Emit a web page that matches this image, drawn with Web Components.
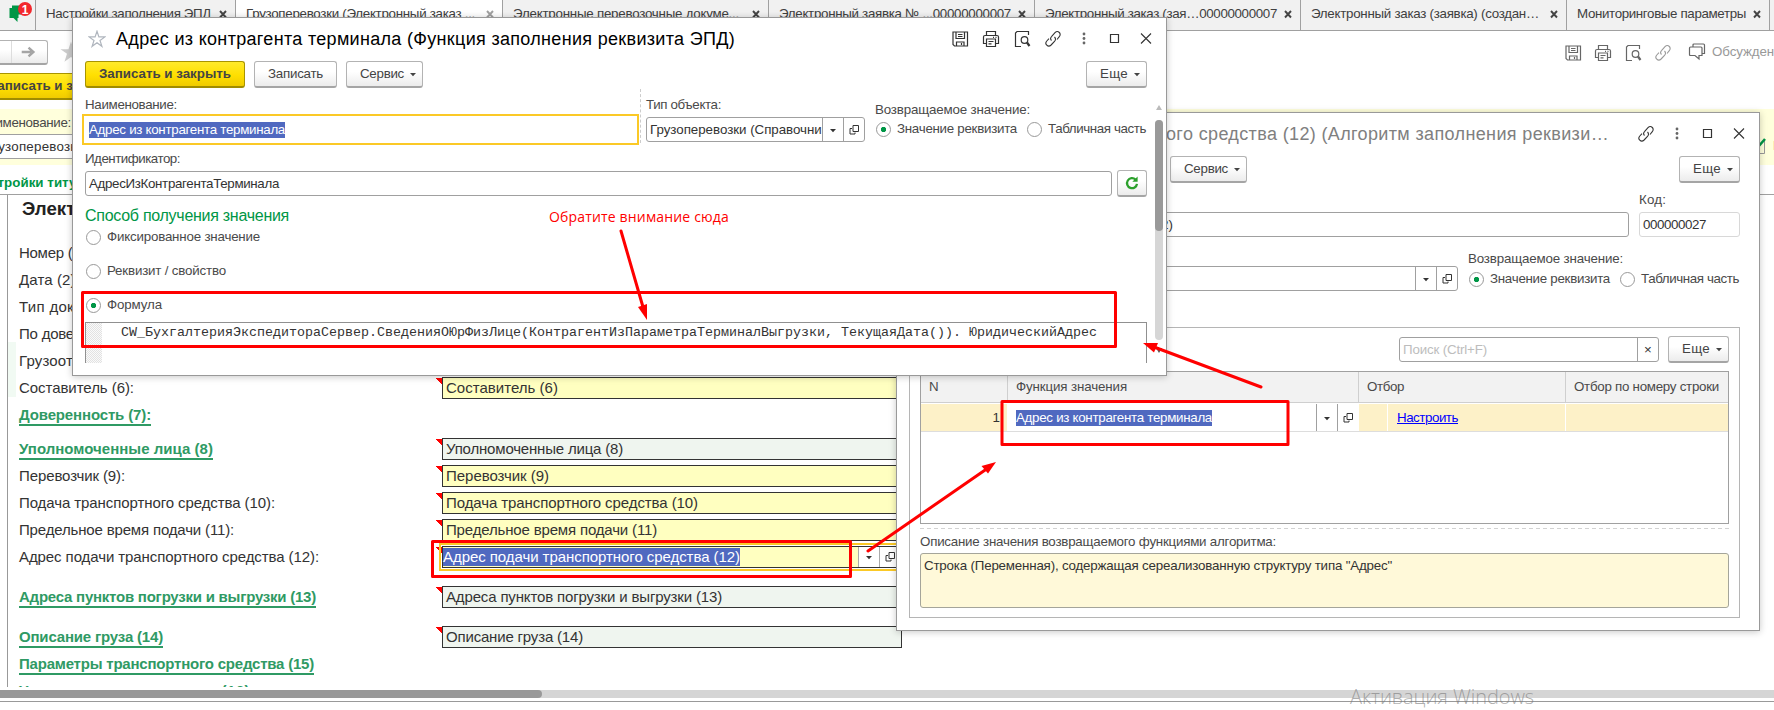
<!DOCTYPE html>
<html lang="ru">
<head>
<meta charset="utf-8">
<title>Функция заполнения реквизита ЭПД</title>
<style>
    html, body {
        margin: 0;
        padding: 0;
    }
    body {
        width: 1774px;
        height: 710px;
        overflow: hidden;
        background: #fff;
        font: 13.330px/16px "Liberation Sans", Arial, sans-serif;
        color: #4a4a4a;
    }
</style>
</head>
<body>
<app-desktop></app-desktop>

<script>
const ICONS = {
    save: '<path d="M2 2h14.500v14H3.500L2 14.500z"/><path d="M5 2v6.500h8.500V2M7 4.500h4.500M7 6.500h4.500M5.500 16v-4h7.500v4M10.500 13v2"/>',
    print: '<path d="M4.500 5V1.500h9V5M4 13.500H1.500V7q0-1.500 1.500-1.500h12q1.500 0 1.500 1.500v6.500H14M4.500 9h9v7.500h-9zM6.500 11.500h5M6.500 13.800h3M11 7.300h1M13.500 7.300h1"/>',
    preview: '<path d="M8 16.500H2.500V3L4 1.500h11.500V5"/><circle cx="11.500" cy="10" r="3.300"/><path d="M14 12.500l2.500 3.500" stroke-width="2.200"/>',
    link: '<path d="M7.500 10.500c-1.500-1.500-1-3 .2-4.200l3.300-3.600c1.300-1.300 3.200-1.300 4.300-.2s1.200 3 0 4.200L13 9.500M10.500 7c1.500 1.500 1.200 3.200 0 4.400l-3.400 3.600c-1.300 1.300-3.200 1.300-4.300.2s-1.200-2.900 0-4.200L5 8.600" stroke-width="1.100"/>',
    dots: '<g fill="#666" stroke="none"><circle cx="9" cy="4" r="1.400"/><circle cx="9" cy="8.500" r="1.400"/><circle cx="9" cy="13" r="1.400"/></g>',
    max: '<path d="M4.500 4.500h8v8h-8z" stroke-width="1.200"/>',
    close: '<path d="M4 3.500l10 10M14 3.500L4 13.500" stroke-width="1.100"/>',
    chat: '<path d="M5 4V2q0-1 1-1h9.500q1 0 1 1v8.500h-2.500M1.500 5q0-1 1-1H13q1 0 1 1v7.500H11v3.500l-4-3.500H2.500q-1 0-1-1z"/>',
    open: '<path d="M8 4.500h5.500v6H8zM7 7.500H5v5.500h5V11.500" stroke-width="1"/>',
    refresh: '<path d="M14 9.800a5 5 0 1 1-1.500-4.300" stroke="#2ca02c" stroke-width="2.300"/><path d="M14.600 2.500v5.300H9.300z" fill="#2ca02c" stroke="none"/>',
    caret: '<path d="M6 8h6l-3 3.200z" fill="currentColor" stroke="none"/>',
    star: '<path d="M9 1.200l1.900 5.700h6L12 10.400l1.900 5.900L9 12.700l-4.900 3.600L6 10.400 1.100 6.900h6z" stroke="#b0b6be"/>'
};

class UiIcon extends HTMLElement {
    connectedCallback() {
        this.attachShadow({ mode: 'open' }).innerHTML = `
            <style>
                :host { display: inline-flex; flex: none; width: 18px; height: 18px; }
            </style>
            <svg width="18" height="18" viewBox="0 0 18 18" fill="none" stroke="currentColor" stroke-width="1.200">${ICONS[this.getAttribute('name')]}</svg>
        `;
    }
}

// Text run tracked out or in so that it takes exactly "w" pixels
class UiText extends HTMLElement {
    connectedCallback() {
        this.attachShadow({ mode: 'open' }).innerHTML = `
            <style>
                :host { display: flex; flex: none; white-space: nowrap; }
                :host([sel]) span { background: #5069c0; color: #fff; }
                :host([ul]) span { border-bottom: 2px solid currentColor; margin-bottom: -2px; }
                span { flex: none; }
            </style>
            <span><slot></slot></span>
        `;
        const w = parseFloat(this.getAttribute('w'));
        if (!w) return;
        const span = this.shadowRoot.querySelector('span');
        const natural = span.getBoundingClientRect().width;
        span.style.letterSpacing = `${(w - natural) / this.textContent.length}px`;
    }
}

class UiButton extends HTMLElement {
    connectedCallback() {
        this.attachShadow({ mode: 'open' }).innerHTML = `
            <style>
                :host {
                    display: flex;
                    flex: none;
                    box-sizing: border-box;
                    height: 27px;
                    width: ${this.getAttribute('width')}px;
                    padding-left: ${this.getAttribute('pad') || 13}px;
                    align-items: center;
                    border: 1px solid #b3b3b3;
                    border-bottom: 2px solid #a5a5a5;
                    border-radius: 3px;
                    background: linear-gradient(#fff 40%, #ececec);
                    color: #444;
                }
                :host([primary]) {
                    border-color: #a89400;
                    border-bottom: 2px solid #a08c00;
                    background: linear-gradient(#ffea2b, #ffdf00 55%, #f0cb00);
                    font-weight: bold;
                }
            </style>
            <slot></slot>${this.hasAttribute('menu') ? '<ui-icon name="caret"></ui-icon>' : ''}
        `;
    }
}

class UiField extends HTMLElement {
    connectedCallback() {
        this.attachShadow({ mode: 'open' }).innerHTML = `
            <style>
                :host {
                    display: flex;
                    box-sizing: border-box;
                    height: 25px;
                    border: 1px solid #a0a0a0;
                    border-radius: 3px;
                    background: #fff;
                    color: #333;
                }
                :host([light]) { border-color: #d8d8d8; }
                :host([focus]) {
                    height: 31px;
                    border: 2px solid #fbc926;
                    border-radius: 0;
                }
                .value {
                    flex: 1;
                    min-width: 0;
                    overflow: hidden;
                    display: flex;
                    align-items: center;
                    padding-left: 3px;
                }
                :host([focus]) .value { padding-left: 5px; }
                .btn {
                    width: 20px;
                    flex: none;
                    display: flex;
                    align-items: center;
                    justify-content: center;
                    border-left: 1px solid #a0a0a0;
                    color: #333;
                }
            </style>
            <div class="value"><slot></slot></div>
            ${this.hasAttribute('pick') ? '<div class="btn"><ui-icon name="caret"></ui-icon></div><div class="btn"><ui-icon name="open"></ui-icon></div>' : ''}
            ${this.hasAttribute('clear') ? '<div class="btn">×</div>' : ''}
        `;
    }
}

class UiRadio extends HTMLElement {
    connectedCallback() {
        this.attachShadow({ mode: 'open' }).innerHTML = `
            <style>
                :host { display: flex; align-items: center; gap: 6px; height: 16px; }
                i {
                    box-sizing: border-box;
                    width: 15px;
                    height: 15px;
                    border: 1px solid #999;
                    border-radius: 50%;
                    background: #fff;
                }
                :host([checked]) i { background: radial-gradient(#009646 2.300px, #fff 3px); }
            </style>
            <i></i><slot></slot>
        `;
    }
}

class AppTab extends HTMLElement {
    connectedCallback() {
        this.attachShadow({ mode: 'open' }).innerHTML = `
            <style>
                :host {
                    display: flex;
                    flex: none;
                    box-sizing: border-box;
                    width: ${this.getAttribute('width')}px;
                    height: 31px;
                    padding: 0 6px 2px 10px;
                    align-items: center;
                    justify-content: space-between;
                    border-right: 1px solid #a0a0a0;
                    border-bottom: 1px solid #a0a0a0;
                    background: #f1f1f1;
                    color: #404040;
                }
                :host([active]) { background: #fff; border-bottom-color: #fff; }
                :host([active]) svg { opacity: .5; }
            </style>
            <slot></slot>
            <svg width="12" height="12" viewBox="0 0 12 12"><path d="M3 3l6 6.500M9 3L3 9.500" stroke="#444" stroke-width="1.900"/></svg>
        `;
    }
}

class AppWindow extends HTMLElement {
    connectedCallback() {
        const tools = this.getAttribute('tools').split(' ');
        this.attachShadow({ mode: 'open' }).innerHTML = `
            <style>
                :host {
                    position: absolute;
                    box-sizing: border-box;
                    display: flex;
                    flex-direction: column;
                    border: 1px solid #999;
                    background: #fff;
                    box-shadow: 0 1px 7px rgba(0, 0, 0, .22);
                }
                header {
                    display: flex;
                    flex: none;
                    height: 41px;
                    align-items: center;
                    font-size: 18px;
                    line-height: 22px;
                }
                .tools { display: flex; margin-left: auto; padding-right: 5px; color: #333; }
                .tools ui-icon { width: 31px; justify-content: center; }
            </style>
            <header>
                <slot name="title"></slot>
                <div class="tools">${tools.map(t => `<ui-icon name="${t}"></ui-icon>`).join('')}</div>
            </header>
            <slot></slot>
        `;
    }
}

class FunctionWindow extends HTMLElement {
    connectedCallback() {
        this.attachShadow({ mode: 'open' }).innerHTML = `
            <style>
                app-window { left: 72px; top: 17px; width: 1095px; height: 359px; }
                .title { display: flex; align-items: center; padding-left: 15px; gap: 10px; color: #000; }
                .commands { display: flex; height: 30px; padding: 0 19px 0 12px; gap: 9px; align-items: center; box-sizing: border-box; }
                .end { margin-left: auto; }
                .body { display: flex; flex: 1; }
                .form { width: 1062px; padding-left: 12px; flex: none; }
                .top { display: flex; height: 62px; }
                .col { padding-top: 8px; box-sizing: border-box; }
                .name { width: 555px; }
                .name ui-field { width: 557px; margin: 1px 0 0 -3px; }
                .type { width: 225px; height: 54px; margin-right: 10px; padding-left: 5px; border-left: 1px dashed #ccc; }
                .type ui-field { margin-top: 4px; }
                .ret { padding-top: 13px; }
                .ret div { display: flex; justify-content: space-between; margin-top: 3px; width: 271px; }
                .ret ui-radio { margin-left: 1px; }
                .id { display: flex; margin-top: 3px; gap: 5px; align-items: center; }
                .id ui-field { width: 1027px; }
                h3 { margin: 9px 0 3px; font: 16px/20px "Liberation Sans", Arial, sans-serif; color: #009646; }
                .form > ui-radio { margin: 0 0 18px 1px; }
                .editor {
                    display: flex;
                    box-sizing: border-box;
                    height: 41px;
                    margin-top: -9px;
                    border: 1px solid #909090;
                    border-bottom: 0;
                    font: 13.330px/19px "Liberation Mono", "Courier New", monospace;
                    color: #333;
                }
                .gutter { width: 16px; margin-right: 19px; background: repeating-conic-gradient(#e2e2e2 0 25%, #fafafa 0 50%) 0 0 / 2px 2px; }
                .scroll { display: flex; flex-direction: column; align-items: center; margin-left: 8px; width: 8px; padding-top: 16px; }
                .up, .down { border: 3px solid transparent; }
                .up { border-bottom: 5px solid #bbb; border-top: 0; margin-bottom: 10px; }
                .down { border-top: 5px solid #555; border-bottom: 0; margin-top: 8px; }
                .track { width: 8px; height: 220px; border-radius: 4px; background: #d6d6d6; }
                .thumb { height: 111px; border-radius: 4px; background: #999; }
            </style>
            <app-window tools="save print preview link dots max close">
                <div class="title" slot="title"><ui-icon name="star"></ui-icon><ui-text w="619">Адрес из контрагента терминала (Функция заполнения реквизита ЭПД)</ui-text></div>
                <div class="commands">
                    <ui-button primary width="160"><ui-text w="132">Записать и закрыть</ui-text></ui-button>
                    <ui-button width="83"><ui-text w="55">Записать</ui-text></ui-button>
                    <ui-button width="77" menu><ui-text w="44">Сервис</ui-text></ui-button>
                    <ui-button class="end" width="61" menu><ui-text w="28">Еще</ui-text></ui-button>
                </div>
                <div class="body">
                    <div class="form">
                        <div class="top">
                            <div class="col name">
                                <ui-text w="92">Наименование:</ui-text>
                                <ui-field focus><ui-text sel w="196">Адрес из контрагента терминала</ui-text></ui-field>
                            </div>
                            <div class="col type">
                                <ui-text w="75">Тип объекта:</ui-text>
                                <ui-field pick><ui-text w="182">Грузоперевозки (Справочник)</ui-text></ui-field>
                            </div>
                            <div class="col ret">
                                <ui-text w="155">Возвращаемое значение:</ui-text>
                                <div>
                                    <ui-radio checked><ui-text w="120">Значение реквизита</ui-text></ui-radio>
                                    <ui-radio><ui-text w="98">Табличная часть</ui-text></ui-radio>
                                </div>
                            </div>
                        </div>
                        <ui-text w="95">Идентификатор:</ui-text>
                        <div class="id">
                            <ui-field><ui-text w="190">АдресИзКонтрагентаТерминала</ui-text></ui-field>
                            <ui-button width="30" pad="5"><ui-icon name="refresh"></ui-icon></ui-button>
                        </div>
                        <h3><ui-text w="204">Способ получения значения</ui-text></h3>
                        <ui-radio><ui-text w="153">Фиксированное значение</ui-text></ui-radio>
                        <ui-radio><ui-text w="119">Реквизит / свойство</ui-text></ui-radio>
                        <ui-radio checked><ui-text w="55">Формула</ui-text></ui-radio>
                        <div class="editor">
                            <div class="gutter"></div>
                            <ui-text w="976">CW_БухгалтерияЭкспедитораСервер.СведенияОЮрФизЛице(КонтрагентИзПараметраТерминалВыгрузки, ТекущаяДата()). ЮридическийАдрес</ui-text>
                        </div>
                    </div>
                    <div class="scroll">
                        <div class="up"></div>
                        <div class="track"><div class="thumb"></div></div>
                        <div class="down"></div>
                    </div>
                </div>
            </app-window>
        `;
    }
}

class AlgorithmWindow extends HTMLElement {
    connectedCallback() {
        this.attachShadow({ mode: 'open' }).innerHTML = `
            <style>
                app-window { left: 896px; top: 112px; width: 864px; height: 519px; }
                .title { padding-left: 269px; color: #808080; }
                .commands { display: flex; height: 31px; padding: 0 19px 0 273px; align-items: center; justify-content: space-between; }
                .form { padding: 7px 19px 0 12px; }
                .line { display: flex; justify-content: space-between; }
                .long { width: 720px; margin-top: 20px; }
                .long ui-text { margin-left: 248px; }
                .code ui-field { width: 101px; margin-top: 4px; }
                .ret { margin-top: 14px; }
                .ret > ui-field { width: 549px; margin-top: 15px; }
                .radios { width: 272px; }
                .radios .line { margin: 4px 1px 0 1px; }
                fieldset {
                    display: block;
                    box-sizing: border-box;
                    height: 291px;
                    margin: 36px 0 0;
                    padding: 8px 10px 0;
                    border: 1px solid #b5b5b5;
                }
                .search { display: flex; justify-content: flex-end; align-items: center; gap: 9px; }
                .search ui-field { width: 260px; }
                .search ui-field ui-text { color: #bdbdbd; }
                .table { box-sizing: border-box; height: 153px; margin-top: 8px; border: 1px solid #a0a0a0; }
                .row { display: grid; grid-template-columns: 86px 350px 206px 162px; gap: 1px; }
                .head { height: 30px; background: #cfcfcf; border-bottom: 1px solid #cfcfcf; }
                .head > * { background: #f2f2f2; padding: 7px 0 0 8px; }
                .line1 { height: 27px; padding-top: 1px; border-bottom: 1px solid #ddd; }
                .line1 > * { background: #fdf1c8; display: flex; align-items: center; color: #333; }
                .line1 .n { justify-content: flex-end; padding-right: 7px; }
                .line1 .edit { background: #fff; padding-left: 8px; }
                .cell-btn { display: flex; align-items: center; height: 27px; width: 20px; border-left: 1px solid #a0a0a0; justify-content: center; }
                .first { margin-left: auto; }
                .sub { width: 28px; height: 27px; border-right: 1px solid #fff; margin-right: 9px; }
                a { color: #00f; text-decoration: underline; }
                hr { border: 0; height: 1px; margin: 4px 0 5px; background: repeating-linear-gradient(90deg, #d2d2d2 0 4px, transparent 4px 7px); }
                .note {
                    box-sizing: border-box;
                    height: 55px;
                    margin-top: 3px;
                    padding: 4px 3px;
                    border: 1px solid #a5a59a;
                    border-radius: 3px;
                    background: #fff9d9;
                    color: #333;
                }
            </style>
            <app-window tools="link dots max close">
                <div class="title" slot="title"><ui-text w="443">ого средства (12) (Алгоритм заполнения реквизи…</ui-text></div>
                <div class="commands">
                    <ui-button width="77" menu><ui-text w="44">Сервис</ui-text></ui-button>
                    <ui-button width="61" menu><ui-text w="28">Еще</ui-text></ui-button>
                </div>
                <div class="form">
                    <div class="line">
                        <ui-field class="long"><ui-text w="12">2)</ui-text></ui-field>
                        <div class="code">
                            <ui-text w="27">Код:</ui-text>
                            <ui-field light><ui-text w="63">000000027</ui-text></ui-field>
                        </div>
                    </div>
                    <div class="line ret">
                        <ui-field pick></ui-field>
                        <div class="radios">
                            <ui-text w="155">Возвращаемое значение:</ui-text>
                            <div class="line">
                                <ui-radio checked><ui-text w="120">Значение реквизита</ui-text></ui-radio>
                                <ui-radio><ui-text w="98">Табличная часть</ui-text></ui-radio>
                            </div>
                        </div>
                    </div>
                    <fieldset>
                        <div class="search">
                            <ui-field clear><ui-text w="84">Поиск (Ctrl+F)</ui-text></ui-field>
                            <ui-button width="61" menu><ui-text w="28">Еще</ui-text></ui-button>
                        </div>
                        <div class="table">
                            <div class="row head">
                                <ui-text>N</ui-text>
                                <ui-text w="111">Функция значения</ui-text>
                                <ui-text w="37">Отбор</ui-text>
                                <ui-text w="145">Отбор по номеру строки</ui-text>
                            </div>
                            <div class="row line1">
                                <div class="n"><ui-text>1</ui-text></div>
                                <div class="edit">
                                    <ui-text sel w="196">Адрес из контрагента терминала</ui-text>
                                    <div class="cell-btn first"><ui-icon name="caret"></ui-icon></div>
                                    <div class="cell-btn"><ui-icon name="open"></ui-icon></div>
                                </div>
                                <div><div class="sub"></div><a><ui-text w="61">Настроить</ui-text></a></div>
                                <div></div>
                            </div>
                        </div>
                        <hr>
                        <ui-text w="356">Описание значения возвращаемого функциями алгоритма:</ui-text>
                        <div class="note"><ui-text w="468">Строка (Переменная), содержащая сереализованную структуру типа "Адрес"</ui-text></div>
                    </fieldset>
                </div>
            </app-window>
        `;
    }
}

class DocRow extends HTMLElement {
    connectedCallback() {
        const kind = this.getAttribute('kind');
        const value = this.getAttribute('value');
        let field = '';
        if (kind === 'edit') {
            field = `<div class="field edit"><ui-text sel w="297">${value}</ui-text>
                <div class="btn first"><ui-icon name="caret"></ui-icon></div><div class="btn"><ui-icon name="open"></ui-icon></div></div>`;
        } else if (value) {
            field = `<div class="field ${kind}"><ui-text w="${this.getAttribute('vw')}">${value}</ui-text></div>`;
        }
        this.attachShadow({ mode: 'open' }).innerHTML = `
            <style>
                :host { display: flex; height: 27px; align-items: center; font-size: 15px; line-height: 18px; color: #333; }
                .label { width: 417px; flex: none; }
                :host([section]) .label { color: #2f9a64; font-weight: bold; }
                .tri { width: 6px; height: 21px; flex: none; }
                .tri.on { background: linear-gradient(to top right, transparent 50%, #f00 50%) 0 1px / 6px 7px no-repeat; }
                .field {
                    display: flex;
                    box-sizing: border-box;
                    width: 460px;
                    height: 22px;
                    align-items: center;
                    padding-left: 3px;
                    border: 1px solid #333;
                    background: #eff5ef;
                }
                .yellow, .edit { background: #ffffc0; }
                .edit { padding: 0; outline: 2px solid #fbc926; outline-offset: 1px; }
                .btn { display: flex; height: 20px; width: 20px; justify-content: center; align-items: center; background: #fff; border-left: 1px solid #aaa; }
                .first { margin-left: 118px; }
            </style>
            <div class="label"><ui-text w="${this.getAttribute('lw') || ''}" ${this.hasAttribute('section') ? 'ul' : ''}>${this.getAttribute('label')}</ui-text></div>
            <div class="tri ${field ? 'on' : ''}"></div>
            ${field}
        `;
    }
}

class MainForm extends HTMLElement {
    connectedCallback() {
        this.attachShadow({ mode: 'open' }).innerHTML = `
            <style>
                :host { display: block; height: 679px; }
                .nav { display: flex; height: 42px; align-items: center; }
                .arrows { display: flex; width: 47px; height: 22px; border: 1px solid #b3b3b3; border-left: 0; border-bottom: 2px solid #a5a5a5; border-radius: 0 3px 3px 0; background: linear-gradient(#fff 40%, #ececec); }
                .arrows svg { margin-left: 11px; border-left: 1px solid #ddd; }
                .fav { margin-left: 11px; }
                .tools { display: flex; align-items: center; margin: 2px 0 0 auto; width: 216px; color: #666; flex: none; }
                .tools ui-icon { width: 30px; justify-content: center; }
                .pale { color: #999; }
                .tools .chat { width: 18px; margin: -3px 6px 0 10px; }
                .tools ui-text { margin-top: -2px; }
                .cmd { height: 36px; display: flex; }
                .cmd ui-button { margin-left: -25px; }
                .band { height: 56px; background: #ffffdc; display: flex; justify-content: space-between; overflow: hidden; }
                .band .left { width: 200px; padding-top: 6px; }
                .left > ui-text { margin-left: -21px; }
                .left ui-field { margin: 3px 0 0 -20px; }
                .check { display: flex; align-items: center; gap: 7px; width: 14px; padding-top: 17px; height: 39px; }
                .heading { height: 30px; border-bottom: 1px solid #a0a0a0; font-weight: bold; color: #009646; box-sizing: border-box; overflow: hidden; }
                .heading ui-text { margin: 10px 0 0 -27px; }
                .doc { margin-left: 7px; border-left: 1px solid #999; height: 492px; padding-left: 11px; overflow: hidden; position: relative; }
                .doc h1 { margin: 0 0 0 3px; height: 44px; font: bold 18.670px/27px "Liberation Sans", Arial, sans-serif; color: #222; }
                .mark { position: absolute; left: 0; top: 147px; width: 8px; height: 55px; background: #f1faf3; }
                .gap7 { margin-top: 7px; }
                .gap13 { margin-top: 13px; }
                .hscroll { height: 8px; margin-top: 3px; background: #d5d5d5; }
                .hscroll div { width: 542px; height: 8px; background: #999; border-radius: 0 4px 4px 0; }
                .foot { margin-top: 3px; border-top: 1px solid #999; }
            </style>
            <div class="nav">
                <div class="arrows"><svg width="36" height="22" viewBox="0 0 36 22"><path d="M10 11h10M17 6.500l5 4.500-5 4.500" fill="none" stroke="#a5a5a5" stroke-width="2.500"/></svg></div>
                <svg class="fav" width="24" height="24" viewBox="0 0 18 18"><path d="M9 1.200l1.900 5.700h6L12 10.400l1.900 5.900L9 12.700l-4.900 3.600L6 10.400 1.100 6.900h6z" fill="#ccc"/></svg>
                <div class="tools">
                    <ui-icon name="save"></ui-icon><ui-icon name="print"></ui-icon><ui-icon name="preview"></ui-icon><ui-icon class="pale" name="link"></ui-icon>
                    <ui-icon class="chat" name="chat"></ui-icon><ui-text class="pale" w="62">Обсужден</ui-text>
                </div>
            </div>
            <div class="cmd"><ui-button primary width="160"><ui-text w="132">Записать и закрыть</ui-text></ui-button></div>
            <div class="band">
                <div class="left">
                    <ui-text w="92">Наименование:</ui-text>
                    <ui-field><ui-text w="100">Грузоперевозки</ui-text></ui-field>
                </div>
                <div class="check">
                    <svg width="6" height="18" viewBox="0 0 6 18" overflow="visible"><path d="M0 16.500h4.500V3" fill="none" stroke="#999"/><path d="M-2 10l7-8" stroke="#009646" stroke-width="2.500"/></svg>
                    <ui-text>И</ui-text>
                </div>
            </div>
            <div class="heading"><ui-text w="128">Настройки титулов</ui-text></div>
            <div class="doc">
                <div class="mark"></div>
                <h1>Электр</h1>
                <doc-row label="Номер (1):" lw="70"></doc-row>
                <doc-row label="Дата (2):" lw="61"></doc-row>
                <doc-row label="Тип док" lw="55"></doc-row>
                <doc-row label="По дове" lw="55"></doc-row>
                <doc-row label="Грузоот" lw="54"></doc-row>
                <doc-row label="Составитель (6):" lw="115" kind="yellow" value="Составитель (6)" vw="112"></doc-row>
                <doc-row section label="Доверенность (7):" lw="132"></doc-row>
                <doc-row class="gap7" section label="Уполномоченные лица (8)" lw="194" kind="green" value="Уполномоченные лица (8)" vw="177"></doc-row>
                <doc-row label="Перевозчик (9):" lw="106" kind="yellow" value="Перевозчик (9)" vw="103"></doc-row>
                <doc-row label="Подача транспортного средства (10):" lw="256" kind="yellow" value="Подача транспортного средства (10)" vw="252"></doc-row>
                <doc-row label="Предельное время подачи (11):" lw="215" kind="yellow" value="Предельное время подачи (11)" vw="211"></doc-row>
                <doc-row label="Адрес подачи транспортного средства (12):" lw="300" kind="edit" value="Адрес подачи транспортного средства (12)"></doc-row>
                <doc-row class="gap13" section label="Адреса пунктов погрузки и выгрузки (13)" lw="297" kind="green" value="Адреса пунктов погрузки и выгрузки (13)" vw="276"></doc-row>
                <doc-row class="gap13" section label="Описание груза (14)" lw="144" kind="green" value="Описание груза (14)" vw="137"></doc-row>
                <doc-row section label="Параметры транспортного средства (15)" lw="295"></doc-row>
                <doc-row section label="Условия перевозки груза (16)" lw="231"></doc-row>
            </div>
            <div class="hscroll"><div></div></div>
            <div class="foot"></div>
        `;
    }
}

class AppDesktop extends HTMLElement {
    connectedCallback() {
        this.attachShadow({ mode: 'open' }).innerHTML = `
            <style>
                :host { display: block; position: relative; width: 1774px; height: 710px; overflow: hidden; }
                nav { display: flex; height: 31px; }
                .bell { box-sizing: border-box; width: 36px; height: 31px; background: #f1f1f1; border: 1px solid #a0a0a0; border-width: 0 1px 1px 0; }
                .bell svg { display: block; }
                .rest { flex: 1; background: #f1f1f1; border-bottom: 1px solid #a0a0a0; }
                .marks, .mark-text, .watermark { position: absolute; }
                .marks { left: 0; top: 0; }
                .mark-text { left: 549px; top: 207px; font: 14px/20px "Open Sans", "Noto Sans", sans-serif; color: #f00; }
                .watermark { left: 1350px; top: 684px; font: 20px/26px "Open Sans", "Noto Sans", sans-serif; font-weight: 300; color: rgba(120, 120, 120, .6); }
            </style>
            <nav>
                <div class="bell"><svg width="35" height="30" viewBox="0 0 35 30">
                    <path d="M12 5.500h9v9h-9zM9.500 8h9v10h-1v4l-4-4h-4z" fill="#009646"/>
                    <circle cx="25" cy="9" r="7" fill="#f3272d"/>
                    <text x="25" y="13.500" text-anchor="middle" font-size="12" font-weight="bold" fill="#fff">1</text>
                </svg></div>
                <app-tab width="200"><ui-text w="165">Настройки заполнения ЭПД</ui-text></app-tab>
                <app-tab width="267" active><ui-text w="229">Грузоперевозки (Электронный заказ ...</ui-text></app-tab>
                <app-tab width="266"><ui-text w="226">Электронные перевозочные докуме...</ui-text></app-tab>
                <app-tab width="266"><ui-text w="232">Электронный заявка № ...00000000007</ui-text></app-tab>
                <app-tab width="266"><ui-text w="232">Электронный заказ (зая…00000000007</ui-text></app-tab>
                <app-tab width="266"><ui-text w="228">Электронный заказ (заявка) (создан…</ui-text></app-tab>
                <app-tab width="203"><ui-text w="169">Мониторинговые параметры</ui-text></app-tab>
                <div class="rest"></div>
            </nav>
            <main-form></main-form>
            <algorithm-window></algorithm-window>
            <function-window></function-window>
            <ui-text class="watermark" w="184">Активация Windows</ui-text>
            <ui-text class="mark-text" w="180">Обратите внимание сюда</ui-text>
            <svg class="marks" width="1774" height="710" viewBox="0 0 1774 710" fill="none" stroke="#f00" stroke-width="3" stroke-linecap="round" stroke-linejoin="round">
                <rect x="82.500" y="292.500" width="1033" height="54"/>
                <rect x="1002" y="401.500" width="286" height="43"/>
                <rect x="432.500" y="541.500" width="418" height="35"/>
                <path d="M621 231L643 307M1261 387L1154 347M868 551L988 468"/>
                <g fill="#f00" stroke="none">
                    <path d="M647 320L638 307L647 304z"/>
                    <path d="M1143 343L1158 343L1154 352.500z"/>
                    <path d="M996 462L988 473.500L981.500 466z"/>
                </g>
            </svg>
        `;
    }
}

// Containers come first, the measured text last, when its surroundings have their fonts
customElements.define('app-desktop', AppDesktop);
customElements.define('main-form', MainForm);
customElements.define('algorithm-window', AlgorithmWindow);
customElements.define('function-window', FunctionWindow);
customElements.define('app-window', AppWindow);
customElements.define('doc-row', DocRow);
customElements.define('app-tab', AppTab);
customElements.define('ui-button', UiButton);
customElements.define('ui-field', UiField);
customElements.define('ui-radio', UiRadio);
customElements.define('ui-icon', UiIcon);
customElements.define('ui-text', UiText);
</script>
</body>
</html>
